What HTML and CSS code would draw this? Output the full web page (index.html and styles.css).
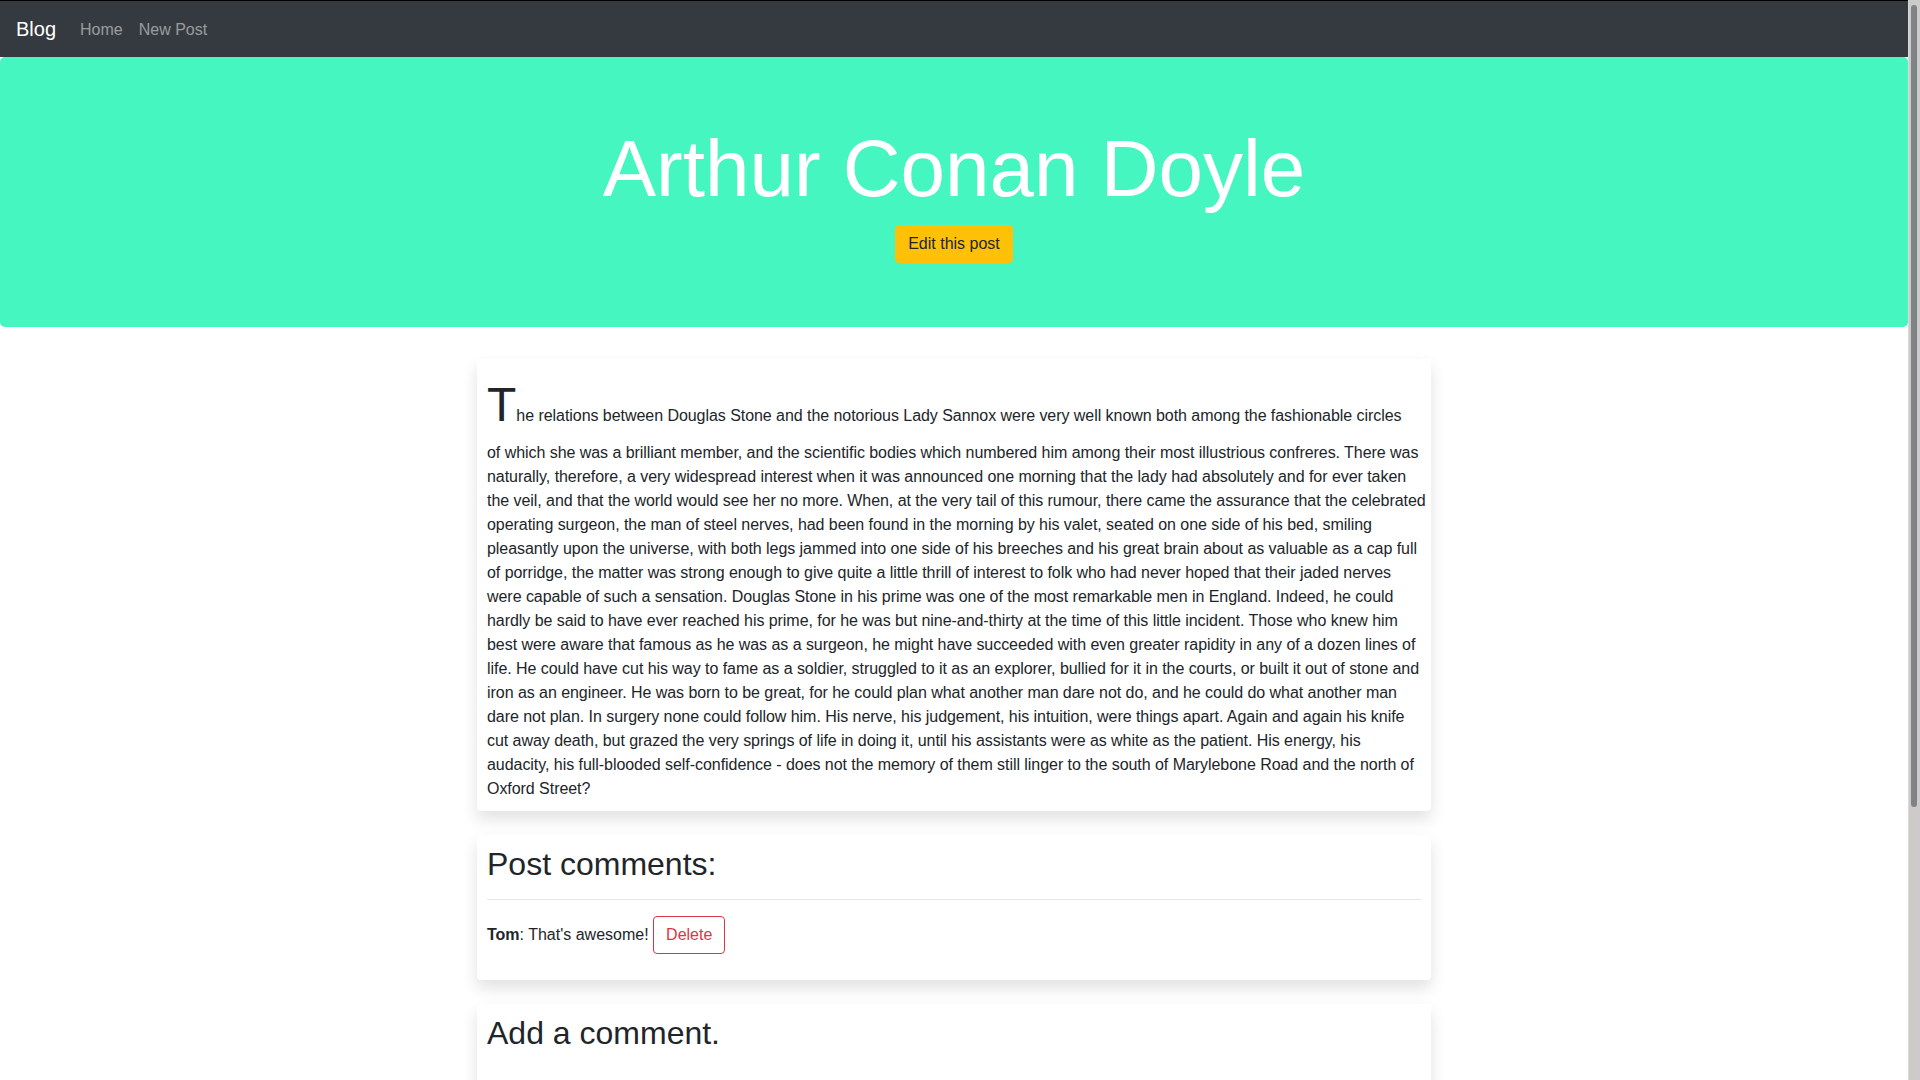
FILE: index.html
```html
<!DOCTYPE html>
<html lang="en">
<head>
<meta charset="utf-8">
<title>Arthur Conan Doyle</title>
<link rel="stylesheet" href="styles.css">
</head>
<body>
<nav class="navbar">
  <a class="brand" href="#">Blog</a>
  <ul class="nav">
    <li><a class="nav-link" href="#">Home</a></li>
    <li><a class="nav-link" href="#">New Post</a></li>
  </ul>
</nav>
<header class="jumbotron">
  <h1 class="display">Arthur Conan Doyle</h1>
  <a class="btn btn-warning" href="#">Edit this post</a>
</header>
<main class="main">
  <article class="card">
    <p class="post-text"><span class="dropcap">T</span>he relations between Douglas Stone and the notorious Lady Sannox were very well known both among the fashionable circles<br>of which she was a brilliant member, and the scientific bodies which numbered him among their most illustrious confreres. There was<br>naturally, therefore, a very widespread interest when it was announced one morning that the lady had absolutely and for ever taken<br>the veil, and that the world would see her no more. When, at the very tail of this rumour, there came the assurance that the celebrated<br>operating surgeon, the man of steel nerves, had been found in the morning by his valet, seated on one side of his bed, smiling<br>pleasantly upon the universe, with both legs jammed into one side of his breeches and his great brain about as valuable as a cap full<br>of porridge, the matter was strong enough to give quite a little thrill of interest to folk who had never hoped that their jaded nerves<br>were capable of such a sensation. Douglas Stone in his prime was one of the most remarkable men in England. Indeed, he could<br>hardly be said to have ever reached his prime, for he was but nine-and-thirty at the time of this little incident. Those who knew him<br>best were aware that famous as he was as a surgeon, he might have succeeded with even greater rapidity in any of a dozen lines of<br>life. He could have cut his way to fame as a soldier, struggled to it as an explorer, bullied for it in the courts, or built it out of stone and<br>iron as an engineer. He was born to be great, for he could plan what another man dare not do, and he could do what another man<br>dare not plan. In surgery none could follow him. His nerve, his judgement, his intuition, were things apart. Again and again his knife<br>cut away death, but grazed the very springs of life in doing it, until his assistants were as white as the patient. His energy, his<br>audacity, his full-blooded self-confidence - does not the memory of them still linger to the south of Marylebone Road and the north of<br>Oxford Street?</p>
  </article>
  <section class="card">
    <h2 class="card-title">Post comments:</h2>
    <hr class="divider">
    <p class="comment"><strong>Tom</strong>: That's awesome! <button class="btn btn-outline-danger" type="button">Delete</button></p>
  </section>
  <section class="card">
    <h2 class="card-title">Add a comment.</h2>
    <form class="comment-form">
      <div class="form-group">
        <label class="form-label" for="author">Author</label>
        <input class="form-control" id="author" type="text">
      </div>
      <div class="form-group">
        <label class="form-label" for="text">Comment</label>
        <textarea class="form-control" id="text" rows="6"></textarea>
      </div>
      <button class="btn btn-primary" type="submit">Submit</button>
    </form>
  </section>
</main>
<div class="scrollbar" aria-hidden="true"><div class="scrollbar-thumb"></div></div>
</body>
</html>
```
FILE: styles.css
```css
* { box-sizing: border-box; }

html, body {
  padding: 0;
}

html {
  margin: 0;
}

body {
  margin: 0 12px 0 0;
  font-family: "Liberation Sans", Arial, sans-serif;
  font-size: 16px;
  line-height: 1.5;
  color: #212529;
  background: #fff;
}

a { text-decoration: none; }

/* window scrollbar */
.scrollbar {
  position: fixed;
  top: 0;
  right: 0;
  bottom: 0;
  width: 12px;
  background: #cdcbc9;
  border-left: 1px solid #dcd8d3;
  z-index: 10;
}

.scrollbar-thumb {
  margin: 5px 0 0 2px;
  width: 6px;
  height: 802px;
  border-radius: 3px;
  background: #7f8385;
}

.navbar {
  display: flex;
  align-items: center;
  background: #343a40;
  border-top: 1px solid #000;
  padding: 8px 16px;
  height: 57px;
}

.brand {
  color: #fff;
  font-size: 20px;
  line-height: 30px;
  padding: 5px 0;
  margin-right: 16px;
}

.nav {
  display: flex;
  list-style: none;
  margin: 0;
  padding: 0;
}

.nav-link {
  display: block;
  color: rgba(255, 255, 255, 0.5);
  padding: 9px 8px 7px;
}

.jumbotron {
  background: #45f6c1;
  border-radius: 5px;
  padding: 64px 32px;
  margin-bottom: 32px;
  text-align: center;
}

.display {
  margin: 0 0 8px;
  font-size: 80px;
  font-weight: 300;
  line-height: 1.2;
  color: #fff;
}

.btn {
  display: inline-block;
  font-family: inherit;
  font-size: 16px;
  line-height: 24px;
  padding: 6px 12px;
  border: 1px solid transparent;
  border-radius: 4px;
  cursor: pointer;
  vertical-align: middle;
}

.btn-warning {
  background: #ffc107;
  border-color: #ffc107;
  color: #212529;
}

.btn-outline-danger {
  background: transparent;
  border-color: #dc3545;
  color: #dc3545;
  vertical-align: baseline;
}

.btn-primary {
  background: #007bff;
  border-color: #007bff;
  color: #fff;
}

.main {
  max-width: 954px;
  margin: 0 auto;
}

.card {
  background: #fff;
  padding: 10px;
  margin-bottom: 24px;
  border-radius: 4px;
  box-shadow: 0 8px 16px rgba(0, 0, 0, 0.12);
}

.post-text {
  margin: 0;
  white-space: nowrap;
  letter-spacing: -0.05px;
}

.dropcap {
  font-size: 48px;
  letter-spacing: 0;
}

.card-title {
  margin: 0 0 8px;
  font-size: 32px;
  font-weight: 500;
  line-height: 1.2;
}

.divider {
  border: 0;
  border-top: 1px solid rgba(0, 0, 0, 0.1);
  margin: 16px 0;
}

.comment {
  margin: 0 0 16px;
}

.comment-form {
  padding-top: 28px;
}

.form-group {
  margin-bottom: 16px;
}

.form-label {
  display: inline-block;
  margin-bottom: 8px;
}

.form-control {
  display: block;
  width: 100%;
  font-family: inherit;
  font-size: 16px;
  line-height: 24px;
  padding: 6px 12px;
  color: #495057;
  border: 1px solid #ced4da;
  border-radius: 4px;
}
```
